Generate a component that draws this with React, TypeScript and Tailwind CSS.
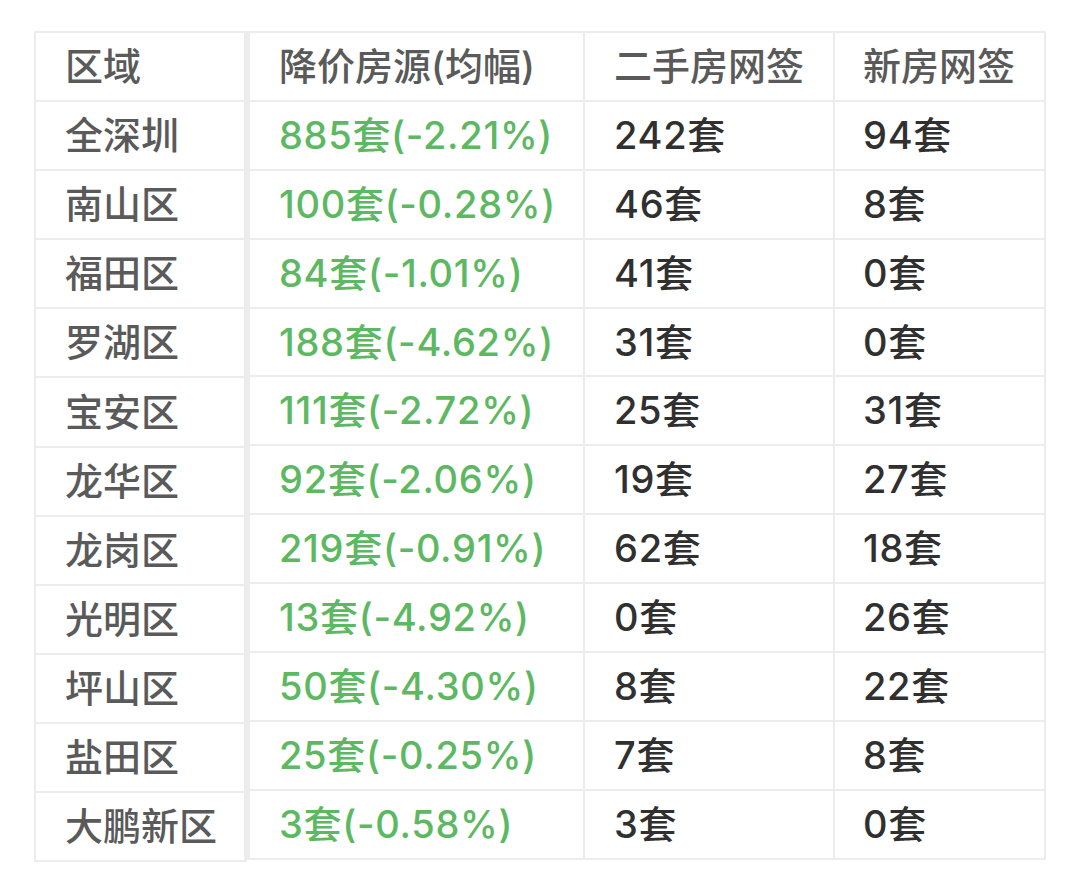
import React from "react";

const rows: [string, string, string, string][] = [
  ["全深圳", "885套(-2.21%)", "242套", "94套"],
  ["南山区", "100套(-0.28%)", "46套", "8套"],
  ["福田区", "84套(-1.01%)", "41套", "0套"],
  ["罗湖区", "188套(-4.62%)", "31套", "0套"],
  ["宝安区", "111套(-2.72%)", "25套", "31套"],
  ["龙华区", "92套(-2.06%)", "19套", "27套"],
  ["龙岗区", "219套(-0.91%)", "62套", "18套"],
  ["光明区", "13套(-4.92%)", "0套", "26套"],
  ["坪山区", "50套(-4.30%)", "8套", "22套"],
  ["盐田区", "25套(-0.25%)", "7套", "8套"],
  ["大鹏新区", "3套(-0.58%)", "3套", "0套"],
];

const font = { fontFamily: '"Inter", "Noto Sans CJK SC", sans-serif' };

export default function App() {
  return (
    <div
      className="w-[1080px] h-[892px] bg-white pt-[31px] pl-[34px] flex items-start font-medium"
      style={font}
    >
      {/* left column */}
      <div className="w-[213px] flex flex-col border-t-2 border-l-2 border-r-[3px] border-[#ececec]">
        <div className="h-[69.1px] border-b-2 border-[#ececec] flex items-center pl-[29px] text-[38px] text-[#5a5a5a]">
          区域
        </div>
        {rows.map((r) => (
          <div
            key={r[0]}
            className="h-[69.1px] border-b-2 border-[#ececec] flex items-center pl-[29px] text-[38px] text-[#5a5a5a]"
          >
            {r[0]}
          </div>
        ))}
      </div>
      {/* right table */}
      <div className="w-[799px] flex flex-col border-t-2 border-l-[3px] border-r-2 border-[#ececec]">
        <div className="h-[68.9px] border-b-2 border-[#ececec] grid grid-cols-[335px_250px_1fr] text-[38px] text-[#5a5a5a]">
          <div className="flex items-center pl-[29px] border-r-2 border-[#ececec]">降价房源(均幅)</div>
          <div className="flex items-center pl-[29px] border-r-2 border-[#ececec]">二手房网签</div>
          <div className="flex items-center pl-[28px]">新房网签</div>
        </div>
        {rows.map((r) => (
          <div
            key={r[0]}
            className="h-[68.9px] border-b-2 border-[#ececec] grid grid-cols-[335px_250px_1fr] text-[38px]"
          >
            <div className="flex items-center pl-[29px] border-r-2 border-[#ececec] text-[#5db862] tracking-[0.7px]">{r[1]}</div>
            <div className="flex items-center pl-[29px] border-r-2 border-[#ececec] text-[#303030] tracking-[0.7px]">{r[2]}</div>
            <div className="flex items-center pl-[28px] text-[#303030] tracking-[0.7px]">{r[3]}</div>
          </div>
        ))}
      </div>
    </div>
  );
}
